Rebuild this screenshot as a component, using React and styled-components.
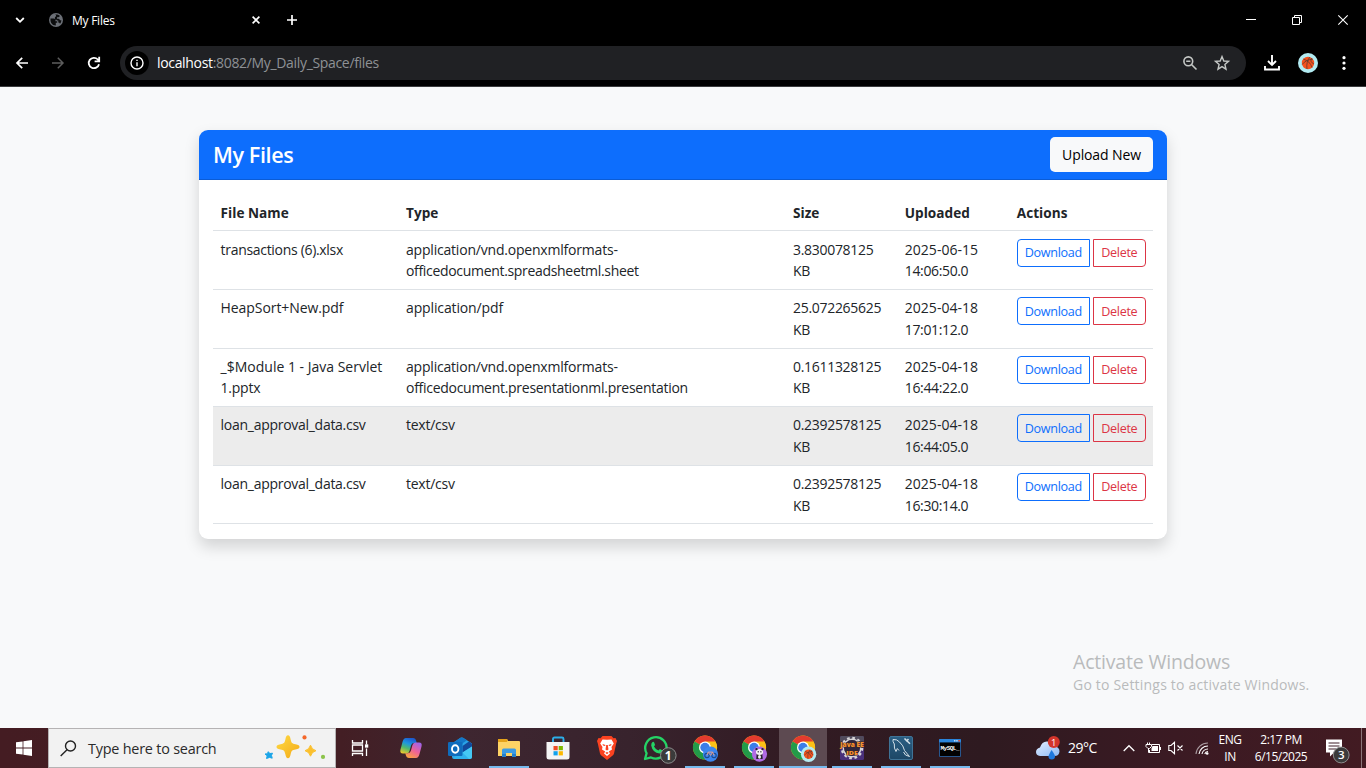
import React from "react";
import styled, { createGlobalStyle } from "styled-components";

const UI = '"Open Sans", "Noto Sans", "Liberation Sans", sans-serif';

const GlobalStyle = createGlobalStyle`
  *, *::before, *::after { box-sizing: border-box; }
  body { margin: 0; overflow: hidden; font-family: ${UI}; background: #f8f9fa; }
  button { font-family: inherit; margin: 0; }
  svg { display: block; flex: none; overflow: visible; }
`;

const Screen = styled.div`
  width: 1366px;
  height: 768px;
  display: flex;
  flex-direction: column;
  overflow: hidden;
`;

/* ---------- Browser chrome ---------- */

const Browser = styled.header`
  height: 87px;
  flex: none;
  background: #000;
  border-bottom: 1px solid #3a3b3d;
  color: #fff;
`;

const TabStrip = styled.div`
  height: 40px;
  display: flex;
  align-items: center;
  padding-left: 12px;
`;

const Slot = styled.div`
  width: ${(p) => p.$w}px;
  display: flex;
  align-items: center;
  justify-content: center;
  flex: none;
`;

const Tab = styled.div`
  width: 216px;
  margin-left: 21px;
  display: flex;
  align-items: center;
  justify-content: space-between;
`;

const TabLabel = styled.div`
  display: flex;
  align-items: center;
  gap: 9px;
  font-size: 12px;
  letter-spacing: -0.25px;
`;

const WindowButtons = styled.div`
  display: flex;
  margin-left: auto;
`;

const Toolbar = styled.div`
  height: 46px;
  display: flex;
  align-items: center;
  padding-left: 4px;
`;

const AddressBar = styled.div`
  width: 1126px;
  height: 34px;
  flex: none;
  margin-left: 8px;
  border-radius: 17px;
  background: #202124;
  display: flex;
  align-items: center;
  padding: 0 8px 0 5px;
`;

const SiteInfo = styled.div`
  width: 24px;
  height: 24px;
  border-radius: 50%;
  background: #000;
  display: flex;
  align-items: center;
  justify-content: center;
`;

const Url = styled.div`
  flex: 1;
  margin-left: 8px;
  padding-bottom: 1px;
  font-size: 14px;
  letter-spacing: -0.33px;
  color: #8e9195;
`;

const UrlHost = styled.span`
  color: #fff;
`;

/* ---------- Page ---------- */

const Page = styled.main`
  flex: 1;
  min-height: 0;
  display: flex;
  flex-direction: column;
  align-items: center;
  background: #f8f9fa;
  padding-top: 43px;
`;

const Card = styled.section`
  width: 968px;
  background: #fff;
  border-radius: 9px;
  overflow: hidden;
  box-shadow: 0 7.2px 14.4px rgba(0, 0, 0, 0.15);
`;

const CardHeader = styled.div`
  height: 50px;
  display: flex;
  align-items: center;
  justify-content: space-between;
  padding: 0 14px;
  background: #0d6efd;
  border-bottom: 1px solid #0b5cd5;
`;

const CardTitle = styled.h1`
  margin: 0;
  font-size: 21.6px;
  font-weight: 600;
  line-height: 26px;
  letter-spacing: -0.4px;
  color: #fff;
`;

const UploadButton = styled.button`
  width: 103px;
  height: 35px;
  border: 0;
  padding: 0;
  border-radius: 5px;
  background: #f8f9fa;
  color: #000;
  font-size: 14px;
  white-space: nowrap;
  letter-spacing: -0.12px;
`;

const CardBody = styled.div`
  padding: 14.4px 14px;
`;

const Table = styled.table`
  width: 940px;
  table-layout: fixed;
  border-collapse: separate;
  border-spacing: 0;
  color: #212529;
  font-size: 14px;
  line-height: 21.6px;
`;

const Col = styled.col`
  width: ${(p) => p.$w}px;
`;

const Th = styled.th`
  padding: 7.2px 7.2px 7.2px 7.6px;
  text-align: left;
  font-weight: 700;
  font-size: 13.6px;
  letter-spacing: 0.02px;
  border-bottom: 1px solid #dee2e6;
`;

const Row = styled.tr`
  background: ${(p) => (p.$hovered ? "#ececec" : "#fff")};
`;

const Td = styled.td`
  padding: 7.2px 7.2px 7.2px 7.6px;
  height: 58.6px;
  vertical-align: top;
  border-bottom: 1px solid #dee2e6;
`;

const CellLine = styled.div`
  white-space: nowrap;
  letter-spacing: ${(p) => p.$track}px;
`;

const ButtonGroup = styled.div`
  display: flex;
  gap: 3px;
`;

const OutlineButton = styled.button`
  width: ${(p) => p.$w}px;
  height: 28px;
  padding: 0;
  border: 1px solid ${(p) => p.$color};
  border-radius: ${(p) => p.$radius};
  background: transparent;
  color: ${(p) => p.$color};
  font-size: 12.6px;
  letter-spacing: -0.3px;
`;

const Watermark = styled.aside`
  align-self: flex-end;
  width: 293px;
  margin-top: auto;
  padding-bottom: 34px;
  color: #b9bbbc;
  white-space: nowrap;
`;

const WatermarkTitle = styled.div`
  font-size: 19.5px;
  line-height: 26px;
  letter-spacing: -0.19px;
`;

const WatermarkText = styled.div`
  font-size: 14px;
  line-height: 19px;
  letter-spacing: 0.2px;
`;

/* ---------- Taskbar ---------- */

const Taskbar = styled.footer`
  height: 40px;
  flex: none;
  display: flex;
  color: #fff;
  background: linear-gradient(90deg, #441c22 0%, #431e24 25%, #3e2630 34%, #38232d 46%, #321b23 58%, #2e1a20 72%, #3b1a23 86%, #421b22 100%);
`;

const SearchBox = styled.div`
  width: 288px;
  border: 1px solid #b5b3b4;
  background: #f2f2f2;
  color: #2b2b2b;
  display: flex;
  align-items: center;
  padding: 0 9px 0 11px;
`;

const SearchLabel = styled.div`
  flex: 1;
  margin-left: 11px;
  font-size: 14.4px;
  letter-spacing: -0.21px;
`;

const Apps = styled.div`
  display: flex;
  margin-left: 2px;
`;

const AppSlot = styled.div`
  width: 49px;
  display: flex;
  justify-content: center;
`;

const AppTile = styled.div`
  width: ${(p) => (p.$active ? 48 : 40)}px;
  display: flex;
  align-items: center;
  justify-content: center;
  padding-top: 2px;
  background: ${(p) => (p.$active ? "#5d4a51" : "transparent")};
  border-bottom: ${(p) => (p.$running ? "2px solid #76b9ed" : "2px solid transparent")};
  background-clip: padding-box;
`;

const Tray = styled.div`
  margin-left: auto;
  display: flex;
  align-items: center;
`;

const Temperature = styled.div`
  width: 43px;
  margin-left: 7px;
  padding-bottom: 1px;
  font-size: 14px;
  letter-spacing: -0.5px;
`;

const TrayStack = styled.div`
  width: ${(p) => p.$w}px;
  text-align: center;
  font-size: 12px;
  line-height: 17px;
  white-space: nowrap;
  letter-spacing: -0.5px;
  padding-bottom: ${(p) => p.$lift || 0}px;
`;

const ShowDesktop = styled.div`
  width: 5px;
  height: 40px;
  border-left: 1px solid #8b7579;
`;

/* ---------- Icons ---------- */

const Line = ({ size = 16, w = 1.6, color = "#fff", children }) => (
  <svg width={size} height={size} viewBox={`0 0 ${size} ${size}`} fill="none" stroke={color} strokeWidth={w}>
    {children}
  </svg>
);

const Globe = () => (
  <svg width="14" height="14" viewBox="0 0 14 14">
    <circle cx="7" cy="7" r="7" fill="#6b6f76" />
    <path d="M1.500 5.600H4.500Q6.500 5.700 6.500 7.600V8.200H8.200V9.700H6.800V12.500Q3.600 12.400 2.200 9.900Q1.200 7.800 1.500 5.600Z M6.200 1.500H8.300Q9.800 1.700 10.800 2.700Q10.600 4.200 9 4.200H8V5.800H9.500Q10.800 6 10.900 7.200H12.400Q12.300 9.200 11 10.700Q10.600 9.500 9.300 9.500V7.600H7.800V6.700H5.900V4.600Q6 3.500 7 3.400V2.200Z" fill="#0c0d0e" />
  </svg>
);

const Basketball = ({ size = 20 }) => (
  <svg width={size} height={size} viewBox="0 0 20 20">
    <circle cx="10" cy="10" r="10" fill="#b2ebf2" />
    <circle cx="10" cy="10" r="6.200" fill="#f4511e" />
    <path d="M4.200 11.500Q8 6.500 14.800 6.200M11.800 4.100Q8 9 9 16M5.500 6.200Q12 8 14 14.500M13.500 5Q11.500 9 16 11" stroke="#5d3a2e" strokeWidth=".8" fill="none" />
  </svg>
);

const WindowsLogo = () => (
  <svg width="16" height="16" viewBox="0 0 16 16" fill="#fff">
    <path d="M0 2.300 6.600 1.400V7.600H0Z M7.400 1.300 16 0V7.600H7.400Z M0 8.400H6.600V14.600L0 13.700Z M7.400 8.400H16V16L7.400 14.700Z" />
  </svg>
);

const Sparkles = () => (
  <svg width="62" height="28" viewBox="0 .8 62 28">
    <defs>
      <linearGradient id="gold" x1="0" y1="0" x2="1" y2="1">
        <stop offset="0" stopColor="#ffdb45" />
        <stop offset="1" stopColor="#f3a916" />
      </linearGradient>
    </defs>
    <path d="M24 2 C25.500 2 26 3 26.700 6.500 C27.500 9.800 28 10.200 31.500 11 C34.500 11.700 35.500 12.300 35.500 13.700 C35.500 15 34.500 15.600 31.500 16.300 C28 17 27.500 17.500 26.700 20.800 C26 24 25.500 25 24 25 C22.500 25 22 24 21.300 20.800 C20.500 17.500 20 17 16.500 16.300 C13.500 15.600 12.500 15 12.500 13.700 C12.500 12.300 13.500 11.700 16.500 11 C20 10.200 20.500 9.800 21.300 6.500 C22 3 22.500 2 24 2Z" fill="url(#gold)" />
    <path d="M46.500 12 Q47.700 16.500 52 17.500 Q47.700 18.500 46.500 23 Q45.300 18.500 41 17.500 Q45.300 16.500 46.500 12Z" fill="#fbc02d" stroke="#fbc02d" strokeLinejoin="round" />
    <path d="M4 18.500 L6 20.300 L8.500 20 L7.500 22.200 L8.200 25 L5.600 24.200 L2.500 25.300 L3.200 22.600 L1 20.800 L3.700 20.600Z" fill="#1ba5e8" stroke="#1ba5e8" strokeLinejoin="round" />
    <circle cx="40.500" cy="4.200" r="2.100" fill="#f4672a" />
    <circle cx="59" cy="23.700" r="2.100" fill="#8bc34a" />
  </svg>
);

const TaskView = () => (
  <Line size={18} w={1.3}>
    <path d="M1.500 1V4H11.500V1 M1.500 17V14.500H11.500V17 M1.500 6H11.500V12H1.500Z M15.500 1.500V5.500 M15.500 9.500V17" />
    <rect x="14.600" y="6" width="2" height="2" fill="#fff" />
  </Line>
);

const Copilot = () => (
  <svg width="24" height="22" viewBox="0 0 24 22">
    <defs>
      <linearGradient id="cpa" x1=".6" y1="0" x2=".2" y2="1">
        <stop offset="0" stopColor="#1d5bd0" />
        <stop offset=".35" stopColor="#1d96e0" />
        <stop offset=".65" stopColor="#51b96c" />
        <stop offset="1" stopColor="#f0c82c" />
      </linearGradient>
      <linearGradient id="cpb" x1=".8" y1="0" x2=".2" y2="1">
        <stop offset="0" stopColor="#9f63ea" />
        <stop offset=".5" stopColor="#ee6298" />
        <stop offset="1" stopColor="#fba43c" />
      </linearGradient>
    </defs>
    <path d="M7 1 H14 Q16.500 1 17.200 4 L17.700 6 H15 Q12.800 6 12.200 8 L10.500 14 Q9.800 16.500 7.500 16.500 H4 Q.5 16.500 1.500 12.500 L3.500 5 Q4.500 1 7 1Z" fill="url(#cpa)" />
    <path d="M17 21 H10 Q7.500 21 6.800 18 L6.300 16.300 H9 Q11.300 16 11.900 13.800 L13.500 8 Q14.200 5.500 16.500 5.500 H20 Q23.500 5.500 22.500 9.500 L20.500 17 Q19.500 21 17 21Z" fill="url(#cpb)" />
  </svg>
);

const Outlook = () => (
  <svg width="24" height="22" viewBox="0 0 24 22">
    <path d="M4 6.500 12.500 .8Q13.700 0 15 .8L24 6.500V19.500Q24 22 21.500 22H6.500Q4 22 4 19.500Z" fill="#2aa3e6" />
    <path d="M4 6.500 12.500 .8Q13.700 0 15 .8L19 3.300 9 10H4Z" fill="#1377c8" />
    <path d="M21 4.600 24 6.800V9.500L14.500 15.500V9Z" fill="#12499b" />
    <path d="M24 9.500V19.500Q24 22 21.500 22H10L14.500 15.500Z" fill="#45c9f5" />
    <path d="M4.500 21 14.500 15.500 21 22H6.500Z" fill="#2fb2ee" />
    <rect x="0" y="5" width="14.500" height="14" rx="1.200" fill="#0f6cbd" />
    <ellipse cx="7.200" cy="12" rx="3.200" ry="3.700" fill="none" stroke="#fff" strokeWidth="1.900" />
  </svg>
);

const Explorer = () => (
  <svg width="22" height="20" viewBox="0 0 22 20">
    <path d="M0 2Q0 1 1 1H9L10 3H21Q22 3 22 4V18H0Z" fill="#fdd365" />
    <path d="M0 1H9L9.800 2.500 8.800 4H0Z" fill="#e5a31a" />
    <path d="M4 19V12Q4 10.500 5.500 10.500H16.500Q18 10.500 18 12V19H14V15H8V19Z" fill="#3c9be4" />
    <path d="M4 16H8V19H4Z M14 16H18V19H14Z" fill="#2580ca" />
  </svg>
);

const Store = () => (
  <svg width="24" height="24" viewBox="0 0 24 24">
    <path d="M7 6V3Q7 1.500 8.500 1.500H16Q17.500 1.500 17.500 3V6" fill="none" stroke="#2caee8" strokeWidth="1.900" />
    <path d="M.5 6H23.500V21Q23.500 23.500 21 23.500H3Q.5 23.500 .5 21Z" fill="#f4f4f4" />
    <path d="M7.500 10H11.700V14.200H7.500Z" fill="#f04e26" />
    <path d="M12.700 10H16.900V14.200H12.700Z" fill="#7eb900" />
    <path d="M7.500 15.200H11.700V19.400H7.500Z" fill="#12a2ec" />
    <path d="M12.700 15.200H16.900V19.400H12.700Z" fill="#fdb900" />
  </svg>
);

const Brave = () => (
  <svg width="20" height="24" viewBox="0 0 20 24">
    <path d="M5.500 0H14.500L16.500 2.200 18.500 2 20 5 19.200 7.500 17 17.500Q16.500 19 15 20L10 24 5 20Q3.500 19 3 17.500L.8 7.500 0 5 1.500 2 3.500 2.200Z" fill="#fb4220" />
    <path d="M10 3.800 14.500 3.600 16.800 7.500 14.500 11 15 13.500 11.800 15.500 13 17.500 10 20 7 17.500 8.200 15.500 5 13.500 5.500 11 3.200 7.500 5.500 3.600Z" fill="#fff" />
    <path d="M5.500 8 8.500 8.900 8 10 6 9.500Z M14.500 8 11.500 8.900 12 10 14 9.500Z M9.200 9H10.800L11.500 13.500 10 14.600 8.500 13.500Z M8.300 16.800 10 15.900 11.700 16.800 10 18.200Z" fill="#fb4220" />
  </svg>
);

const WhatsApp = () => (
  <svg width="26" height="30" viewBox="0 -1 26 30">
    <path d="M2 25 3.600 19.200A10.700 10.700 0 1 1 8 23.400Z" fill="none" stroke="#25d366" strokeWidth="2.300" strokeLinejoin="round" />
    <path d="M9.300 8.300Q10.500 7.300 11.200 8.600L12 10.700Q12 11.500 11 12.500Q12.500 15.500 15.500 16.500L16.900 15.100 19.700 16.500Q19.500 19.500 16.500 19.600Q9.500 18.500 8.200 11.500Q8.200 9.300 9.300 8.300Z" fill="#25d366" />
    <circle cx="25.300" cy="21.500" r="7.800" fill="#3b3b3b" stroke="#8c8c8c" />
    <text x="25.300" y="25.800" textAnchor="middle" fontSize="12" fontWeight="700" fill="#fff" fontFamily={UI}>1</text>
  </svg>
);

const chromeBadges = {
  bike: (
    <g>
      <circle cx="17.800" cy="18" r="7.600" fill="#3b86ee" />
      <g fill="none" stroke="#1b4a8c" strokeWidth="1.100">
        <circle cx="14.300" cy="19.300" r="2.200" />
        <circle cx="21.300" cy="19.300" r="2.200" />
      </g>
      <path d="M14.300 19.300 15.500 16H20L21.300 19.300M15.500 16.500L18 19.300 20 16" fill="none" stroke="#f0a08a" strokeWidth=".9" />
    </g>
  ),
  panda: (
    <g>
      <circle cx="17.800" cy="18" r="7.600" fill="#b06be4" />
      <path d="M15 17H20.500L21 23H14.500Z" fill="#28232d" />
      <ellipse cx="17.800" cy="15.800" rx="3.600" ry="3" fill="#f6f3f7" />
      <circle cx="14.800" cy="13" r="1.200" fill="#28232d" />
      <circle cx="20.800" cy="13" r="1.200" fill="#28232d" />
      <path d="M16 15.600H17M18.700 15.600H19.700" stroke="#28232d" strokeWidth="1.400" />
      <ellipse cx="17.800" cy="20.800" rx="1.500" ry="1.800" fill="#f6f3f7" />
    </g>
  ),
  ball: (
    <g transform="translate(10.200 10.400)">
      <Basketball size={15.4} />
    </g>
  ),
};

const Chrome = ({ badge }) => (
  <svg width="26" height="28" viewBox="-1 -1.5 26 28">
    <circle cx="12" cy="12" r="12" fill="#fbc116" />
    <path d="M12 12 1.600 6A12 12 0 0 1 22.400 6Z" fill="#e33b2e" />
    <path d="M1.600 6A12 12 0 0 0 12 24L17.200 15 12 12Z" fill="#229b49" />
    <path d="M12 6H22.400A12 12 0 0 1 12 24L17.200 15Z" fill="#fbc116" />
    <circle cx="12" cy="12" r="6" fill="#fff" />
    <circle cx="12" cy="12" r="4.700" fill="#3c7de8" />
    <g transform="translate(-.3 .6)">{chromeBadges[badge]}</g>
  </svg>
);

const Eclipse = () => (
  <svg width="24" height="24" viewBox="0 0 24 24">
    <rect width="24" height="24" rx="1.500" fill="#49307a" />
    <rect width="24" height="12" rx="1.500" fill="#514b5c" />
    <circle cx="12" cy="12" r="8.700" fill="none" stroke="#d8d5d8" strokeWidth="1.600" />
    <circle cx="12" cy="12" r="10.200" fill="none" stroke="#d8d5d8" strokeWidth="2.200" strokeDasharray="2.700 2.640" />
    <circle cx="12" cy="12" r="7.900" fill="#30263c" />
    <g fill="#f5922f" stroke="#3c2424" strokeWidth=".8" paintOrder="stroke" fontFamily={UI} fontWeight="800" textAnchor="middle">
      <text x="12" y="10.800" fontSize="6" textLength="23.500" lengthAdjust="spacingAndGlyphs">Java EE</text>
      <text x="12" y="18.900" fontSize="5.900" textLength="11.500" lengthAdjust="spacingAndGlyphs">IDE</text>
    </g>
  </svg>
);

const Workbench = () => (
  <svg width="24" height="24" viewBox="0 0 24 24">
    <defs>
      <linearGradient id="wb" x1="0" y1="0" x2="0" y2="1">
        <stop offset="0" stopColor="#2b5f84" />
        <stop offset="1" stopColor="#1d4766" />
      </linearGradient>
    </defs>
    <rect x=".5" y=".5" width="23" height="23" rx="1.500" fill="url(#wb)" stroke="#3f7396" />
    <path d="M4 3.500Q8 3 10.500 6Q14.500 9.500 15.500 14.500L20.500 20.500L16.500 19 14.500 16M4 3.500Q3.500 5.500 5.300 8Q4.800 12.500 7 15.500L8.300 12.500 10 14.500" fill="none" stroke="#d4e0e8" strokeWidth="1" />
    <path d="M15.500 2.500 17.800 4.800 19.500 3M17.800 4.800 21 7.800" stroke="#d4e0e8" strokeWidth="1.500" fill="none" />
  </svg>
);

const MySqlConsole = () => (
  <svg width="22" height="18" viewBox="0 0 22 18">
    <rect width="22" height="18" rx="1" fill="#27578f" />
    <rect width="22" height="3.500" rx="1" fill="#2a85dc" />
    <path d="M15 1H16.500V2.400H15ZM17.200 1H18.700V2.400H17.200Z" fill="#b9dcf7" />
    <path d="M19.300 1H21V2.400H19.300Z" fill="#e8563b" />
    <rect x="1" y="3.500" width="20" height="13.500" fill="#020202" />
    <text x="1.500" y="10.700" fontSize="6" textLength="19" fill="#fff" fontFamily='"Liberation Mono", monospace' fontWeight="700">MySQL_</text>
  </svg>
);

const Weather = () => (
  <svg width="26" height="26" viewBox="0 0 26 26">
    <defs>
      <linearGradient id="cloud" x1="0" y1="0" x2="1" y2="1">
        <stop offset="0" stopColor="#e2efff" />
        <stop offset="1" stopColor="#8db8f4" />
      </linearGradient>
    </defs>
    <path d="M5 21Q1 20.500 1 17Q1 13.500 5 12.500Q7 6 12.500 6.500Q17 7 18.500 11.500Q24.500 11.500 24.500 16.500Q24 21 19.500 21Z" fill="url(#cloud)" />
    <path d="M16.500 15Q20 19.500 20 21.500Q20 24.500 16.800 24.500Q13.500 24.500 13.500 21.500Q13.500 20 16.500 15Z" fill="#1e78de" />
    <circle cx="18.800" cy="7" r="6" fill="#d3352b" />
    <text x="18.800" y="10.500" textAnchor="middle" fontSize="9.500" fill="#fff" fontFamily={UI}>1</text>
  </svg>
);

const Battery = () => (
  <svg width="17" height="14" viewBox="0 0 17 14" fill="none" stroke="#fff">
    <path d="M7 3.500H14.500V11.500H4.500V9M15.500 6V9M2.500 1.500V4M4.500 1.500V4" />
    <path d="M1 3.500H6.500V5.500L4.500 7.500H3L1 5.500ZM3.500 7V11.500H5" />
    <path d="M7.500 5H13V10H6.500V7.500Z" fill="#fff" stroke="none" />
  </svg>
);

const Speaker = () => (
  <svg width="16" height="14" viewBox="0 0 16 14" fill="none" stroke="#fff" strokeWidth="1.100">
    <path d="M.8 4.500H3L6.500 1.300V12.700L3 9.500H.8ZM9.500 4.500 14.500 9.500M14.500 4.500 9.500 9.500" />
  </svg>
);

const Wifi = () => (
  <svg width="14" height="12" viewBox="0 1 14 12" fill="none" stroke="#fff" strokeWidth="1.100">
    <path d="M1 13A12 12 0 0 1 13 2" stroke="#a99ba0" />
    <path d="M4 13A9 9 0 0 1 13 5M7 13A6 6 0 0 1 13 8M9.800 13A3.500 3.500 0 0 1 13 10.500" />
    <circle cx="12.200" cy="12.500" r="1.300" fill="#fff" stroke="none" />
  </svg>
);

const Notifications = () => (
  <svg width="26" height="34" viewBox="0 -7.500 26 34">
    <path d="M1 1H17V14H9L5 18V14H1Z" fill="#fff" />
    <path d="M3.500 4.500H14.500M3.500 7.500H14.500M3.500 10.500H11" stroke="#40202a" strokeWidth="1.100" />
    <circle cx="16.200" cy="16.500" r="7.900" fill="#3b3b3b" stroke="#8c8c8c" />
    <text x="16.200" y="20.700" textAnchor="middle" fontSize="11.500" fontWeight="600" fill="#fff" fontFamily={UI}>3</text>
  </svg>
);

/* ---------- Data ---------- */

/* Each line of a cell is [text, letter-spacing]. */
const size = (value) => [[value, -0.3], ["KB", -0.3]];
const uploaded = (date, time) => [[date, 0.02], [time, -0.36]];

const files = [
  {
    id: 1,
    cells: [
      [["transactions (6).xlsx", -0.31]],
      [["application/vnd.openxmlformats-", -0.2], ["officedocument.spreadsheetml.sheet", -0.32]],
      size("3.830078125"),
      uploaded("2025-06-15", "14:06:50.0"),
    ],
  },
  {
    id: 2,
    cells: [[["HeapSort+New.pdf", -0.08]], [["application/pdf", -0.13]], size("25.072265625"), uploaded("2025-04-18", "17:01:12.0")],
  },
  {
    id: 3,
    cells: [
      [["_$Module 1 - Java Servlet", 0], ["1.pptx", -0.25]],
      [["application/vnd.openxmlformats-", -0.2], ["officedocument.presentationml.presentation", -0.28]],
      size("0.1611328125"),
      uploaded("2025-04-18", "16:44:22.0"),
    ],
  },
  {
    id: 4,
    hovered: true,
    cells: [[["loan_approval_data.csv", -0.28]], [["text/csv", -0.25]], size("0.2392578125"), uploaded("2025-04-18", "16:44:05.0")],
  },
  {
    id: 5,
    cells: [[["loan_approval_data.csv", -0.28]], [["text/csv", -0.25]], size("0.2392578125"), uploaded("2025-04-18", "16:30:14.0")],
  },
];

const apps = [
  { id: "copilot", icon: <Copilot /> },
  { id: "outlook", icon: <Outlook /> },
  { id: "explorer", icon: <Explorer />, running: true },
  { id: "store", icon: <Store /> },
  { id: "brave", icon: <Brave /> },
  { id: "whatsapp", icon: <WhatsApp /> },
  { id: "chrome-1", icon: <Chrome badge="bike" />, running: true },
  { id: "chrome-2", icon: <Chrome badge="panda" />, running: true },
  { id: "chrome-3", icon: <Chrome badge="ball" />, running: true, active: true },
  { id: "eclipse", icon: <Eclipse />, running: true },
  { id: "workbench", icon: <Workbench />, running: true },
  { id: "mysql", icon: <MySqlConsole />, running: true },
];

const BrowserChrome = () => (
  <Browser>
    <TabStrip>
      <Slot $w={16}><Line size={10} w={1.8}><path d="M1.200 3 5 6.800 8.800 3" /></Line></Slot>
      <Tab>
        <TabLabel><Globe />My Files</TabLabel>
        <Slot $w={18}><Line size={8} w={1.6}><path d="M.6 .6 7.400 7.400M7.400 .6 .6 7.400" /></Line></Slot>
      </Tab>
      <Slot $w={54}><Line size={10} w={1.7}><path d="M5 0V10M0 5H10" /></Line></Slot>
      <WindowButtons>
        <Slot $w={46}><Line size={10} w={1}><path d="M0 4.500H10" /></Line></Slot>
        <Slot $w={46}><Line size={10} w={1}><path d="M.5 2.500H7.500V9.500H.5ZM2.500 2.500V.5H9.500V7.500H7.500" /></Line></Slot>
        <Slot $w={46}><Line size={10} w={1.1}><path d="M.3 .3 9.700 9.700M9.700 .3 .3 9.700" /></Line></Slot>
      </WindowButtons>
    </TabStrip>
    <Toolbar>
      <Slot $w={36}><Line size={12} w={1.7}><path d="M12 6H1.200M6.200 .8 1 6 6.200 11.200" /></Line></Slot>
      <Slot $w={36}><Line size={12} w={1.5} color="#5d5d5d"><path d="M0 6H10.800M5.800 .8 11 6 5.800 11.200" /></Line></Slot>
      <Slot $w={36}><Line size={14} w={1.8}><path d="M12 8.200A5.200 5.200 0 1 1 10.800 3.500L12 4.800M12.200 .8V5.300H7.600" /></Line></Slot>
      <AddressBar>
        <SiteInfo><Line size={14} w={1.4}><circle cx="7" cy="7" r="6" /><path d="M7 6.200V10.200M7 3.700V5.100" /></Line></SiteInfo>
        <Url><UrlHost>localhost</UrlHost>:8082/My_Daily_Space/files</Url>
        <Slot $w={32}>
          <Line size={14} w={1.6} color="#c4c7c5"><circle cx="5.300" cy="5.300" r="4.400" /><path d="M8.500 8.500 13.500 13.500M3.200 5.300H7.400" /></Line>
        </Slot>
        <Slot $w={32}>
          <Line size={16} w={1.4} color="#c4c7c5"><path d="M8 1.600 9.800 6 14.500 6.400 10.900 9.500 12 14.200 8 11.700 4 14.200 5.100 9.500 1.500 6.400 6.200 6Z" /></Line>
        </Slot>
      </AddressBar>
      <Slot $w={52}><Line size={16} w={1.9}><path d="M8 0V9.500M4 6 8 10 12 6M1 11V14.500H15V11" /></Line></Slot>
      <Slot $w={20}><Basketball /></Slot>
      <Slot $w={52}>
        <svg width="4" height="14" viewBox="0 0 4 14" fill="#fff"><circle cx="2" cy="1.700" r="1.600" /><circle cx="2" cy="7" r="1.600" /><circle cx="2" cy="12.300" r="1.600" /></svg>
      </Slot>
    </Toolbar>
  </Browser>
);

const FilesCard = () => (
  <Card>
    <CardHeader>
      <CardTitle>My Files</CardTitle>
      <UploadButton>Upload New</UploadButton>
    </CardHeader>
    <CardBody>
      <Table>
        <colgroup>
          <Col $w={185.4} /><Col $w={387} /><Col $w={111.8} /><Col $w={112} /><Col $w={143.8} />
        </colgroup>
        <thead>
          <tr><Th>File Name</Th><Th>Type</Th><Th>Size</Th><Th>Uploaded</Th><Th>Actions</Th></tr>
        </thead>
        <tbody>
          {files.map((f) => (
            <Row key={f.id} $hovered={f.hovered}>
              {f.cells.map((lines, i) => (
                <Td key={i}>
                  {lines.map(([text, track]) => (
                    <CellLine key={text} $track={track}>{text}</CellLine>
                  ))}
                </Td>
              ))}
              <Td>
                <ButtonGroup>
                  <OutlineButton $w={73} $color="#0d6efd" $radius="4px 0 0 4px">Download</OutlineButton>
                  <OutlineButton $w={53} $color="#dc3545" $radius="0 4px 4px 0">Delete</OutlineButton>
                </ButtonGroup>
              </Td>
            </Row>
          ))}
        </tbody>
      </Table>
    </CardBody>
  </Card>
);

const SystemTray = () => (
  <Tray>
    <Weather />
    <Temperature>29°C</Temperature>
    <Slot $w={35}><Line size={12} w={1.3}><path d="M.7 9 6 3.700 11.300 9" /></Line></Slot>
    <Slot $w={14}><Battery /></Slot>
    <Slot $w={32}><Speaker /></Slot>
    <Slot $w={20}><Wifi /></Slot>
    <TrayStack $w={36}>ENG<br />IN</TrayStack>
    <TrayStack $w={66} $lift={1}>2:17 PM<br />6/15/2025</TrayStack>
    <Slot $w={47}><Notifications /></Slot>
    <ShowDesktop />
  </Tray>
);

export default function App() {
  return (
    <Screen>
      <GlobalStyle />
      <BrowserChrome />
      <Page>
        <FilesCard />
        <Watermark>
          <WatermarkTitle>Activate Windows</WatermarkTitle>
          <WatermarkText>Go to Settings to activate Windows.</WatermarkText>
        </Watermark>
      </Page>
      <Taskbar>
        <Slot $w={48}><WindowsLogo /></Slot>
        <SearchBox>
          <Line size={17} w={1.4} color="#222"><circle cx="10.500" cy="6" r="5" /><path d="M7 9.700 .7 16" /></Line>
          <SearchLabel>Type here to search</SearchLabel>
          <Sparkles />
        </SearchBox>
        <Slot $w={48}><TaskView /></Slot>
        <Apps>
          {apps.map((a) => (
            <AppSlot key={a.id}>
              <AppTile $running={a.running} $active={a.active}>{a.icon}</AppTile>
            </AppSlot>
          ))}
        </Apps>
        <SystemTray />
      </Taskbar>
    </Screen>
  );
}
